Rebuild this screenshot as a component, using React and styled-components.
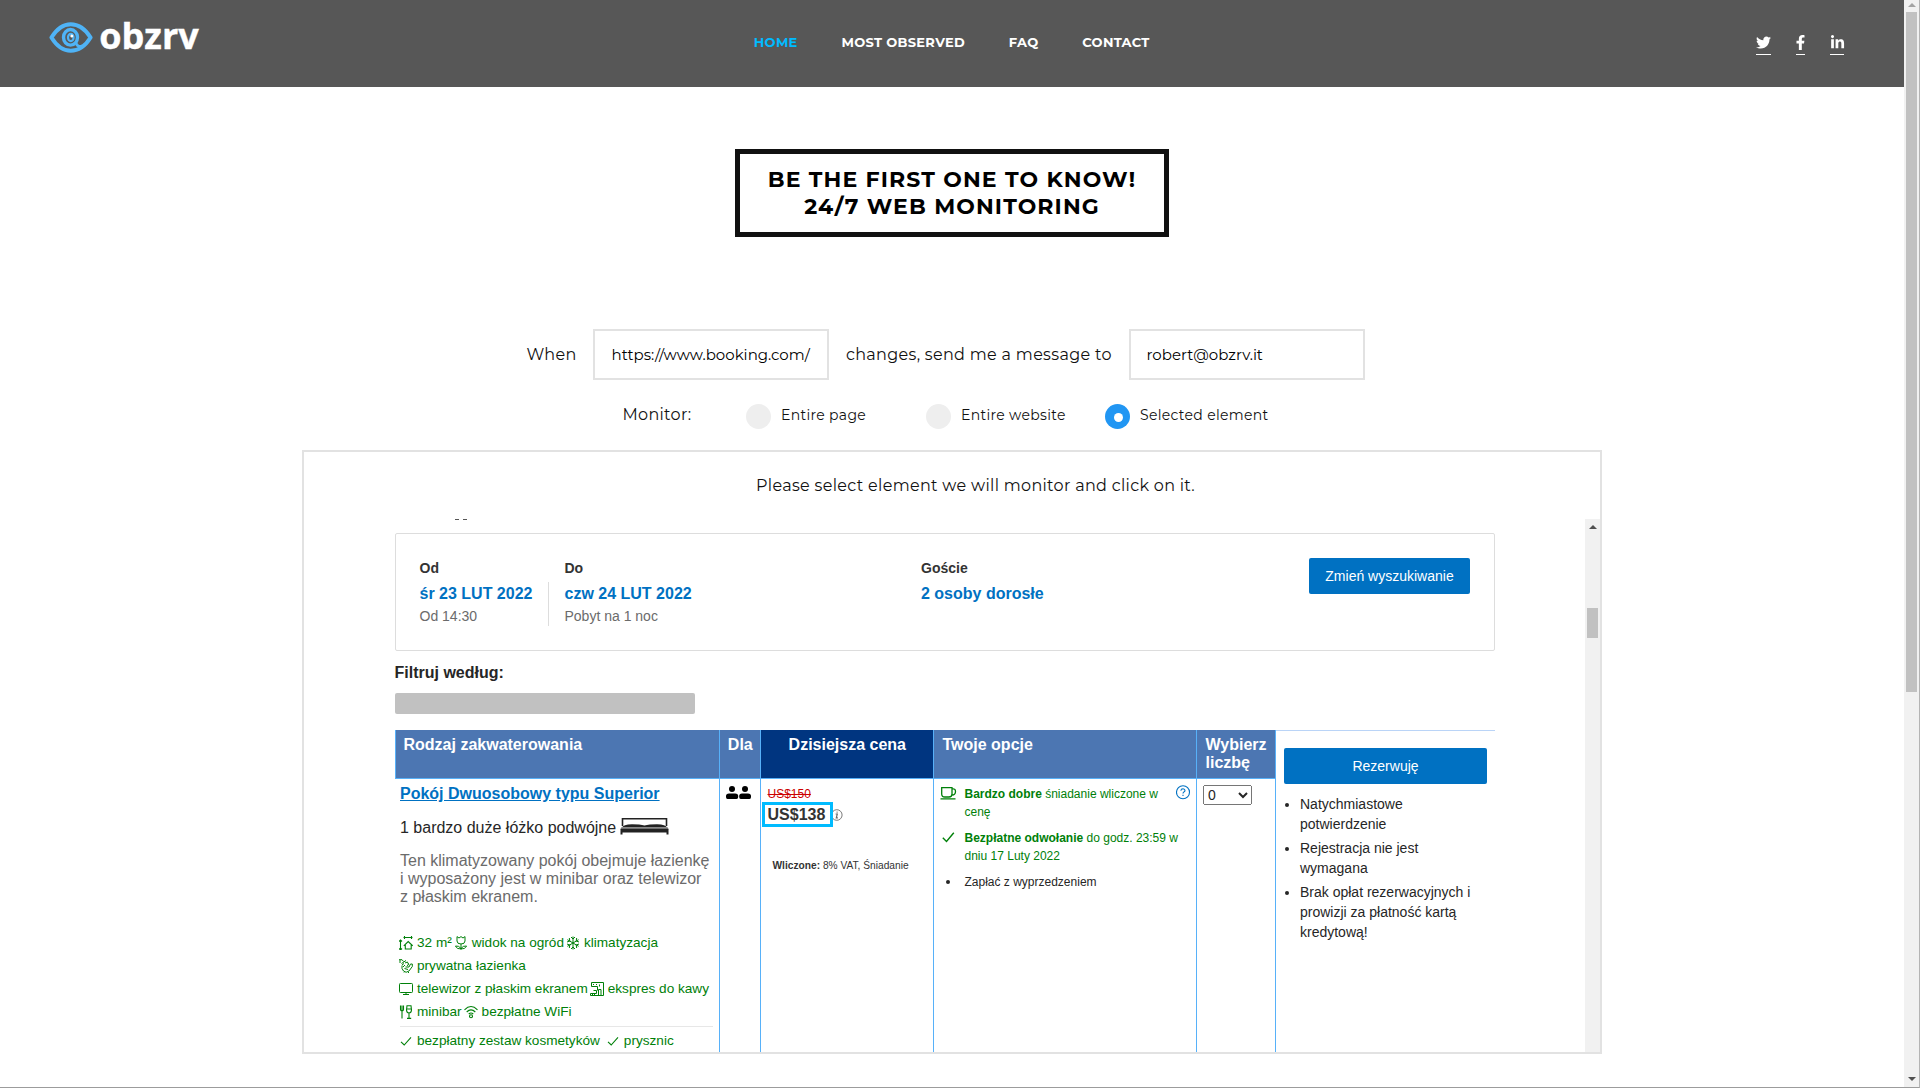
import React from 'react';
import styled, { createGlobalStyle, css } from 'styled-components';
import { FaTwitter, FaFacebookF, FaLinkedinIn } from 'react-icons/fa';

const mont = "Montserrat, Inter, 'Open Sans', sans-serif";
const arial = "'Liberation Sans', Arial, sans-serif";

const Global = createGlobalStyle`
  * { box-sizing: border-box; }
  body { margin: 0; background: #fff; font-family: ${mont}; overflow: hidden; }
`;

const Window = styled.div`
  display: grid;
  grid-template-columns: 1904px 15px;
  width: 1920px;
  height: 1088px;
  border-right: 1px solid #b4b4b4;
  border-bottom: 1px solid #9c9c9c;
  overflow: hidden;
`;

const Page = styled.div`
  display: flex;
  flex-direction: column;
  align-items: center;
`;

const Header = styled.header`
  display: grid;
  grid-template-columns: 1fr auto 1fr;
  width: 1904px;
  height: 87px;
  background: #575757;
`;

const Brand = styled.a`
  display: flex;
  align-items: flex-start;
  padding: 22px 0 0 49px;
  svg { display: block; flex: none; }
`;

const BrandName = styled.span`
  margin: -6px 0 0 6.3px;
  font: 700 36px/40px 'Open Sans', 'Noto Sans', sans-serif;
  letter-spacing: 0;
  -webkit-text-stroke: 0.4px #fff;
  color: #fff;
`;

const Nav = styled.nav`
  display: flex;
  gap: 43.8px;
  padding: 34px 0.6px 0 0;
`;

const NavLink = styled.a`
  font: 700 13px/16px ${mont};
  letter-spacing: 0.3px;
  color: ${(p) => (p.$active ? '#00bbff' : '#fff')};
`;

const Social = styled.div`
  display: flex;
  justify-content: flex-end;
  gap: 25px;
  padding: 34px 60px 0 0;
`;

const SocialLink = styled.a`
  display: flex;
  align-items: center;
  justify-content: center;
  width: ${(p) => p.$w}px;
  height: 21px;
  padding-bottom: ${(p) => p.$pb || 4}px;
  border-bottom: 1px solid #fff;
  color: #fff;
  svg { flex: none; }
`;

const Banner = styled.h1`
  width: 434px;
  height: 88px;
  margin: 62px 0 0;
  padding: 12px 0 0;
  border: 5px solid #111;
  font: 700 22px/27px ${mont};
  letter-spacing: 1.1px;
  text-align: center;
  color: #000;
`;

const FormRow = styled.div`
  display: flex;
  align-items: center;
  align-self: flex-start;
  height: 51px;
  margin: 92px 0 0 526.5px;
`;

const Label = styled.span`
  font: 400 16px/20px ${mont};
  letter-spacing: 0.32px;
  white-space: nowrap;
  color: #111;
`;

const FieldLabel = styled(Label)`
  width: ${(p) => p.$w}px;
  padding-left: ${(p) => p.$pad || 0}px;
  padding-top: 1px;
`;

const Field = styled.div`
  width: 236px;
  height: 51px;
  padding: 0 0 0 ${(p) => p.$pad || 16}px;
  border: 2px solid #e2e2e2;
  font: 400 15px/47px ${mont};
  white-space: nowrap;
  color: #000;
`;

const RadioRow = styled.div`
  display: flex;
  align-items: flex-start;
  align-self: flex-start;
  height: 26px;
  margin: 24px 0 0 622.5px;
`;

const MonitorLabel = styled(Label)`
  width: 123.5px;
  padding-top: 1px;
`;

const Option = styled.label`
  display: flex;
  gap: 10px;
  width: ${(p) => p.$w}px;
  font: 400 14px/22px ${mont};
  letter-spacing: 0.32px;
  white-space: nowrap;
  color: #111;
`;

const Radio = styled.span`
  display: flex;
  align-items: center;
  justify-content: center;
  flex: none;
  width: 25px;
  height: 25px;
  border-radius: 50%;
  background: ${(p) => (p.$on ? '#2196f3' : '#eee')};
  &::after {
    content: '';
    width: 9px;
    height: 9px;
    border-radius: 50%;
    margin: 1px 0 0 1px;
    background: ${(p) => (p.$on ? '#fff' : 'transparent')};
  }
`;

const Panel = styled.section`
  display: flex;
  flex-direction: column;
  width: 1300px;
  height: 604px;
  margin-top: 20px;
  border: 2px solid #e2e2e2;
`;

const Hint = styled(Label)`
  padding: 24px 0 23px 452px;
`;

const Frame = styled.div`
  display: grid;
  grid-template-columns: 1281px 15px;
  height: 533px;
  font-family: ${arial};
`;

const Site = styled.div`
  display: flex;
  flex-direction: column;
  height: 533px;
  padding-left: 91px;
  overflow: hidden;
`;

const Clipped = styled.div`
  display: flex;
  flex: none;
  gap: 4px;
  height: 14px;
  padding-left: 60px;
  i { width: 4px; height: 1px; background: #555; }
`;

const Search = styled.div`
  display: flex;
  flex: none;
  width: 1100px;
  height: 118px;
  padding: 24px 24px 0 7px;
  border: 1px solid #ddd;
  border-radius: 2px;
`;

const SearchField = styled.div`
  width: ${(p) => p.$w}px;
`;

const SearchLabel = styled.div`
  padding-left: 16.5px;
  font: 700 14px/20px ${arial};
  color: #333;
`;

const SearchValue = styled.div`
  display: flex;
  flex-direction: column;
  height: 44px;
  margin-top: 4px;
  padding-left: 15.5px;
  border-left: 1px solid ${(p) => (p.$line ? '#ddd' : 'transparent')};
  font: 400 14px/20px ${arial};
  color: #6b6b6b;
  b { font: 700 16px/24px ${arial}; color: #0071c2; }
`;

const Button = styled.button`
  display: block;
  width: ${(p) => p.$w}px;
  height: 36px;
  padding: 0;
  border: 0;
  border-radius: 2px;
  background: #0071c2;
  font: 400 14px/36px ${arial};
  color: #fff;
`;

const FilterTitle = styled.div`
  margin: 12px 0 0 -0.5px;
  font: 700 16px/20px ${arial};
  color: #262626;
`;

const FilterBar = styled.div`
  flex: none;
  width: 300px;
  height: 21px;
  margin: 10px 0 16px;
  border-radius: 2px;
  background: #c1c1c1;
`;

const Table = styled.div`
  display: grid;
  grid-template-columns: 324px 41px 173px 263px 79px 220px;
  grid-template-rows: 49px 400px;
  flex: none;
  width: 1100px;
`;

const Th = styled.div`
  padding: 6px 0 0 ${(p) => (p.$center ? 0.6 : p.$pad || 8.5)}px;
  border-left: 1px solid #57b1f9;
  border-bottom: 1px solid #57b1f9;
  background: ${(p) => (p.$dark ? '#003580' : '#4c76b2')};
  font: 700 16px/18px ${arial};
  text-align: ${(p) => (p.$center ? 'center' : 'left')};
  color: #fff;
`;

const Td = styled.div`
  padding: 6px 0 0 ${(p) => p.$pad}px;
  border-left: ${(p) => (p.$first ? '0' : '1px solid #57b1f9')};
  color: #262626;
`;

const Reserve = styled.div`
  grid-column: 6;
  grid-row: 1 / 3;
  border-left: 1px solid #57b1f9;
`;

const ReserveInner = styled.div`
  padding: 17px 8px 0;
  border-top: 1px solid #bad4f7;
`;

const Perks = styled.ul`
  margin: 10px 0 0;
  padding-left: 16px;
  font: 400 14px/20px ${arial};
  white-space: nowrap;
  color: #262626;
  li + li { margin-top: 4px; }
`;

const RoomLink = styled.a`
  display: block;
  font: 700 16px/18px ${arial};
  text-decoration: underline;
  white-space: nowrap;
  color: #0071c2;
`;

const Beds = styled.div`
  display: flex;
  gap: 4px;
  height: 18px;
  margin-top: 16px;
  font: 400 16px/18px ${arial};
  white-space: nowrap;
  svg { display: block; margin-top: -1px; }
`;

const Description = styled.p`
  margin: 15px 0 25px;
  font: 400 16px/18px ${arial};
  white-space: nowrap;
  color: #6b6b6b;
`;

const Facilities = styled.div`
  display: flex;
  gap: ${(p) => p.$gap || 2}px;
  height: 23px;
  margin-left: -1px;
`;

const Facility = styled.span`
  display: flex;
  align-items: center;
  gap: 4px;
  font: 400 13.6px/23px ${arial};
  white-space: nowrap;
  color: #008009;
  svg { display: block; flex: none; }
`;

const Rule = styled.div`
  width: 313px;
  height: 1px;
  margin: 3px 0 2px;
  background: #e7e7e7;
`;

const OldPrice = styled.div`
  padding-left: 6.5px;
  font: 400 12px/18px ${arial};
  text-decoration: line-through;
  color: #c00;
`;

const PriceLine = styled.div`
  display: flex;
  height: 25px;
  margin: -1px 0 31px 1px;
`;

const Price = styled.span`
  z-index: 1;
  width: 71px;
  height: 25px;
  padding-left: 2.5px;
  border: 3px solid #00bbff;
  background: #fff;
  font: 700 16px/19px ${arial};
  color: #333;
`;

const PriceInfo = styled.span`
  margin: 7px 0 0 -2px;
  svg { display: block; }
`;

const Included = styled.div`
  padding-left: 11.5px;
  font: 400 10.2px/15px ${arial};
  white-space: nowrap;
  color: #333;
`;

const Terms = styled.div`
  display: grid;
  grid-template-columns: 24.5px 211px 15px;
  row-gap: 8px;
  font: 400 12px/18px ${arial};
  white-space: nowrap;
  svg { display: block; }
`;

const Term = styled.div`
  grid-column: 2;
  color: ${(p) => (p.$good ? '#008009' : '#262626')};
`;

const TermIcon = styled.div`
  grid-column: 1;
  padding: ${(p) => p.$top}px 0 0 ${(p) => p.$left || 0}px;
`;

const Dot = styled.div`
  width: 4px;
  height: 4px;
  border-radius: 50%;
  background: #262626;
`;

const Amount = styled.select`
  display: block;
  width: 49px;
  height: 20px;
  font: 400 14px ${arial};
  color: #262626;
`;

const Track = styled.div`
  display: flex;
  flex-direction: column;
  align-items: center;
  height: ${(p) => p.$h}px;
  background: #f1f1f1;
`;

const Thumb = styled.div`
  width: 11px;
  height: ${(p) => p.$h}px;
  margin-top: ${(p) => p.$mt}px;
  background: #c1c1c1;
`;

const Arrow = styled.div`
  width: 0;
  height: 0;
  margin-top: ${(p) => p.$mt}px;
  border: 4px solid transparent;
  ${(p) =>
    p.$down
      ? css`border-top-color: #505050; border-bottom-width: 0;`
      : css`border-bottom-color: ${p.$faint ? '#a3a3a3' : '#505050'}; border-top-width: 0;`}
`;

const EyeLogo = () => (
  <svg width="44" height="32" viewBox="0 0 44 32" fill="none" stroke="#4fb3f6" strokeWidth="4">
    <path d="M2.400 15.500C8 6.500 14 2.200 21.700 2.200S36 6.500 41.600 15.500C36 24.500 29.500 28.800 21.700 28.800S8 24.500 2.400 15.500Z" strokeLinejoin="round" />
    <ellipse cx="21.500" cy="15.300" rx="7" ry="7.800" strokeWidth="3.400" />
    <ellipse cx="21.800" cy="15.500" rx="2.800" ry="3.600" strokeWidth="2.200" />
    <path d="M27 20.500C27.500 24 30.500 25.300 33.500 23.500" strokeWidth="2.600" />
    <circle cx="22.800" cy="14" r="1.500" fill="#fff" stroke="none" />
  </svg>
);

const Line = ({ w = 14, h = 14, sw = 1.1, color = '#008009', children }) => (
  <svg width={w} height={h} viewBox={`0 0 ${w} ${h}`} fill="none" stroke={color} strokeWidth={sw}>
    {children}
  </svg>
);

const SizeIcon = () => (
  <Line>
    <path d="M4.500 1.500H13.500M5.500 0V3M12.500 0V3M1.500 4.500V13.500M0 5.500L1.500 4L3 5.500M0 12.500L1.500 14L3 12.500M4.800 9.800L9.200 5.500L13.700 9.800M6.300 9V13H12.200V9" />
  </Line>
);
const FlowerIcon = () => (
  <Line sw={1}>
    <path d="M3 .6L5 2L7 .6L9 2L11 .6V5Q11 8 7 8Q3 8 3 5ZM7 8V14M7 12.500Q5 9.500 1.500 10Q3 13.500 7 12.500Q9 9.500 12.500 10Q11 13.500 7 12.500" />
  </Line>
);
const SnowIcon = () => (
  <Line sw={1}>
    <path d="M7 .5V13.500M1.400 3.700L12.600 10.300M1.400 10.300L12.600 3.700M5 1L7 3L9 1M5 13L7 11L9 13M1 6L3.800 5L3.300 2M13 6L10.200 5L10.700 2M1 8L3.800 9L3.300 12M13 8L10.200 9L10.700 12" />
  </Line>
);
const BathIcon = () => (
  <Line sw={1}>
    <path d="M0 .7H3L4.500 2.500M1 1V4M2.500 4.500L7 1.500M3 6L5 4.500M6 4L8.500 3M4 8L6 6M3 6.500V9.500L4.500 12Q7 14.500 10 12L13.300 7.500V5H11.500L10 8H6.500M8 6.500A1.500 1.500 0 1 0 8 3.500M9 10.500L5.500 9.500M5 13.500V14M9.500 13V14" />
  </Line>
);
const TvIcon = () => (
  <Line sw={1}>
    <rect x=".5" y="1.500" width="13" height="9" rx=".8" />
    <path d="M7 10.500V12.500M4 12.500H10" />
  </Line>
);
const CoffeeIcon = () => (
  <Line sw={1}>
    <path d="M1.500 .5H13.500V13.500H.5V11.500H6.500V8.500H3.500M1.500 .5V4.500H7.500V8.500M8.500 13V7.500H11V13M3 2.500H4M6 2.500H7M9.500 2.500V4.500M2.500 11.500V13.500M4.500 11.500V13.500" />
  </Line>
);
const MinibarIcon = () => (
  <Line>
    <path d="M1.500 .5V4.500Q1.500 6 3 6Q4.500 6 4.500 4.500V.5M3 .5V13.500M8 .8H12L12.500 5Q12.300 8 10 8Q7.700 8 7.500 5ZM7.700 4H12.300M10 8V13.300M8 13.400H12.200" />
  </Line>
);
const WifiIcon = () => (
  <Line>
    <path d="M.5 4.800Q7 -1.800 13.500 4.800M2.700 7Q7 2.700 11.300 7M4.700 9Q7 7 9.300 9" />
    <circle cx="7" cy="11.300" r="1.500" />
  </Line>
);
const TickIcon = () => (
  <Line>
    <path d="M2 7.800L5.200 11L12 3.300" />
  </Line>
);
const BedIcon = () => (
  <svg width="49" height="17" viewBox="0 0 49 17">
    <path d="M2.500 8V.7H46.500V8" fill="none" stroke="#222" strokeWidth="1.600" />
    <path d="M2 9.500Q3 6.500 12 6.300Q20 6.300 24.500 7.500Q29 6.300 37 6.300Q46 6.500 47 9.500Z" fill="#222" />
    <path d="M1.500 9H47.500L48.500 11.500H.5Z" fill="#8a8a8a" />
    <path d="M.5 10.800H48.500V16.500H46.500V14.500H2.500V16.500H.5Z" fill="#222" />
  </svg>
);
const PeopleIcon = () => (
  <svg width="25" height="13" viewBox="0 0 25 13">
    <circle cx="6" cy="3.100" r="3" />
    <circle cx="19" cy="3.100" r="3" />
    <path d="M0 11V10Q0 7.500 3 7.500H9.200Q12.200 7.500 12.200 10V11Q12.200 13 10.500 13H1.500Q0 13 0 11ZM13.200 11V10Q13.200 7.500 16 7.500H22Q25 7.500 25 10V11Q25 13 23.500 13H14.800Q13.200 13 13.200 11Z" />
  </svg>
);
const InfoIcon = () => (
  <Line w={12} h={12} sw={0.9} color="#6b6b6b">
    <circle cx="5.800" cy="6" r="5.300" />
    <path d="M4.600 5H6.300L5.300 8.800H6.900M6.200 2.700L6 3.700" strokeWidth="1.200" />
  </Line>
);
const CupIcon = () => (
  <Line w={17} h={13} sw={1.3}>
    <path d="M1.700 .7H12V7Q12 10 9 10H4.700Q1.700 10 1.700 7ZM12 2Q15.500 1.300 15.500 4.500Q15.500 8 12 8M.5 11.800H15.500" />
  </Line>
);
const CheckIcon = () => (
  <Line w={13} h={11} sw={1.4}>
    <path d="M.8 5.800L4.500 9.500L11.800 .7" />
  </Line>
);
const HelpIcon = () => (
  <Line w={15} h={15} sw={1.1} color="#0071c2">
    <circle cx="7" cy="7.300" r="6.500" />
    <path d="M4.900 5.700Q5 3.800 7 3.800Q9 3.900 9 5.500Q9 6.500 7.800 7.100Q7 7.600 7 8.600M7 9.800V11" />
  </Line>
);

const facilityRows = [
  [[SizeIcon, '32 m²'], [FlowerIcon, 'widok na ogród'], [SnowIcon, 'klimatyzacja']],
  [[BathIcon, 'prywatna łazienka']],
  [[TvIcon, 'telewizor z płaskim ekranem'], [CoffeeIcon, 'ekspres do kawy']],
  [[MinibarIcon, 'minibar'], [WifiIcon, 'bezpłatne WiFi']],
];

const FacilityRow = ({ items, gap }) => (
  <Facilities $gap={gap}>
    {items.map(([Icon, text]) => (
      <Facility key={text}>
        <Icon />
        {text}
      </Facility>
    ))}
  </Facilities>
);

export default function App() {
  return (
    <Window>
      <Global />
      <Page>
        <Header>
          <Brand>
            <EyeLogo />
            <BrandName>obzrv</BrandName>
          </Brand>
          <Nav>
            <NavLink $active>HOME</NavLink>
            <NavLink>MOST OBSERVED</NavLink>
            <NavLink>FAQ</NavLink>
            <NavLink>CONTACT</NavLink>
          </Nav>
          <Social>
            <SocialLink $w={15}><FaTwitter size={15} /></SocialLink>
            <SocialLink $w={9}><FaFacebookF size={15} /></SocialLink>
            <SocialLink $w={14} $pb={3}><FaLinkedinIn size={15} /></SocialLink>
          </Social>
        </Header>

        <Banner>
          BE THE FIRST ONE TO KNOW!
          <br />
          24/7 WEB MONITORING
        </Banner>

        <FormRow>
          <FieldLabel $w={66.5}>When</FieldLabel>
          <Field $pad={16.5}>https://www.booking.com/</Field>
          <FieldLabel $w={300} $pad={17}>changes, send me a message to</FieldLabel>
          <Field $pad={15.5}>robert@obzrv.it</Field>
        </FormRow>

        <RadioRow>
          <MonitorLabel>Monitor:</MonitorLabel>
          <Option $w={180}><Radio />Entire page</Option>
          <Option $w={179}><Radio />Entire website</Option>
          <Option $w={180}><Radio $on />Selected element</Option>
        </RadioRow>

        <Panel>
          <Hint>Please select element we will monitor and click on it.</Hint>
          <Frame>
            <Site>
              <Clipped><i /><i /></Clipped>
              <Search>
                <SearchField $w={145}>
                  <SearchLabel>Od</SearchLabel>
                  <SearchValue><b>śr 23 LUT 2022</b><span>Od 14:30</span></SearchValue>
                </SearchField>
                <SearchField $w={356.5}>
                  <SearchLabel>Do</SearchLabel>
                  <SearchValue $line><b>czw 24 LUT 2022</b><span>Pobyt na 1 noc</span></SearchValue>
                </SearchField>
                <SearchField $w={404.5}>
                  <SearchLabel>Goście</SearchLabel>
                  <SearchValue><b>2 osoby dorosłe</b></SearchValue>
                </SearchField>
                <Button $w={161}>Zmień wyszukiwanie</Button>
              </Search>
              <FilterTitle>Filtruj według:</FilterTitle>
              <FilterBar />
              <Table>
                <Th $pad={7.5}>Rodzaj zakwaterowania</Th>
                <Th $center>Dla</Th>
                <Th $center $dark>Dzisiejsza cena</Th>
                <Th>Twoje opcje</Th>
                <Th>Wybierz liczbę</Th>
                <Td $first $pad={5}>
                  <RoomLink>Pokój Dwuosobowy typu Superior</RoomLink>
                  <Beds>1 bardzo duże łóżko podwójne <BedIcon /></Beds>
                  <Description>
                    Ten klimatyzowany pokój obejmuje łazienkę
                    <br />
                    i wyposażony jest w minibar oraz telewizor
                    <br />
                    z płaskim ekranem.
                  </Description>
                  {facilityRows.map((items) => (
                    <FacilityRow key={items[0][1]} items={items} />
                  ))}
                  <Rule />
                  <FacilityRow
                    gap={6}
                    items={[[TickIcon, 'bezpłatny zestaw kosmetyków'], [TickIcon, 'prysznic']]}
                  />
                </Td>
                <Td $pad={5.5}><PeopleIcon /></Td>
                <Td $pad={0}>
                  <OldPrice>US$150</OldPrice>
                  <PriceLine>
                    <Price>US$138</Price>
                    <PriceInfo><InfoIcon /></PriceInfo>
                  </PriceLine>
                  <Included><b>Wliczone:</b> 8% VAT, Śniadanie</Included>
                </Td>
                <Td $pad={6}>
                  <Terms>
                    <TermIcon $top={2}><CupIcon /></TermIcon>
                    <Term $good>
                      <b>Bardzo dobre</b> śniadanie wliczone w<br />cenę
                    </Term>
                    <HelpIcon />
                    <TermIcon $top={3} $left={1.5}><CheckIcon /></TermIcon>
                    <Term $good>
                      <b>Bezpłatne odwołanie</b> do godz. 23:59 w<br />dniu 17 Luty 2022
                    </Term>
                    <TermIcon $top={7} $left={6.2}><Dot /></TermIcon>
                    <Term>Zapłać z wyprzedzeniem</Term>
                  </Terms>
                </Td>
                <Td $pad={6}>
                  <Amount defaultValue="0"><option>0</option></Amount>
                </Td>
                <Reserve>
                  <ReserveInner>
                    <Button $w={203}>Rezerwuję</Button>
                    <Perks>
                      <li>Natychmiastowe<br />potwierdzenie</li>
                      <li>Rejestracja nie jest<br />wymagana</li>
                      <li>Brak opłat rezerwacyjnych i<br />prowizji za płatność kartą<br />kredytową!</li>
                    </Perks>
                  </ReserveInner>
                </Reserve>
              </Table>
            </Site>
            <Track $h={533}>
              <Arrow $mt={6} />
              <Thumb $mt={79} $h={30} />
            </Track>
          </Frame>
        </Panel>
      </Page>
      <Track $h={1087}>
        <Arrow $mt={3} $faint />
        <Thumb $mt={5} $h={680} />
        <Arrow $mt={385} $down />
      </Track>
    </Window>
  );
}
